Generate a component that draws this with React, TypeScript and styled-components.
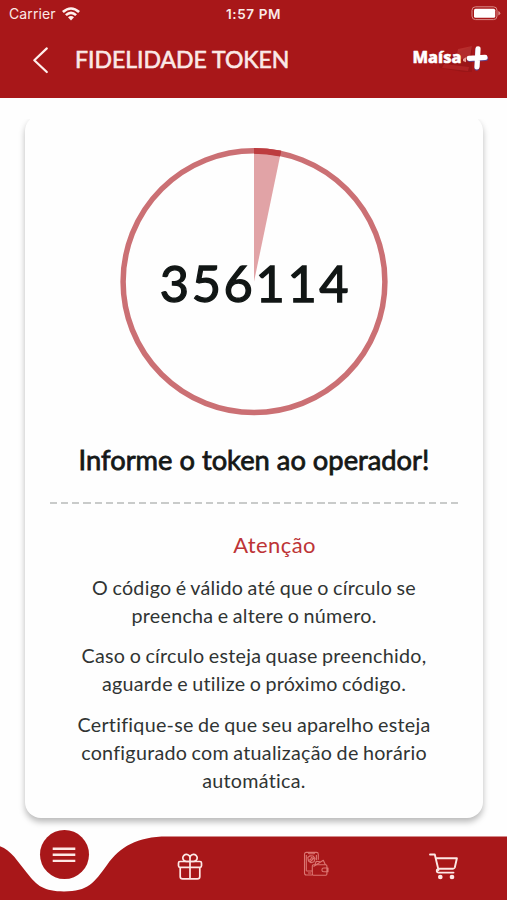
import React from "react";
import styled, { createGlobalStyle } from "styled-components";

const RED = "#a81719";

const GlobalStyle = createGlobalStyle`
  * { box-sizing: border-box; }
  html, body { margin: 0; background: #fefefe; }
  body { font-family: Lato, "Liberation Sans", sans-serif; }
`;

const Screen = styled.div`
  width: 507px;
  height: 900px;
  display: flex;
  flex-direction: column;
  overflow: hidden;
  background: #fefefe;
`;

const Header = styled.header`
  height: 98px;
  flex: none;
  background: ${RED};
  color: #fbe9e7;
`;

const StatusBar = styled.div`
  display: grid;
  grid-template-columns: 1fr auto 1fr;
  align-items: center;
  height: 27px;
  padding: 0 6px 0 9px;
  font-family: Inter, Roboto, sans-serif;
  font-size: 14px;
`;

const Carrier = styled.div`
  display: flex;
  align-items: center;
  gap: 6px;
  letter-spacing: 0.1px;
`;

const Clock = styled.div`
  font-size: 13.5px;
  font-weight: 600;
  letter-spacing: 0.6px;
  margin-right: 3px;
`;

const BatterySlot = styled.div`
  display: flex;
  justify-content: flex-end;
`;

const TitleBar = styled.div`
  display: flex;
  align-items: center;
  height: 66px;
  padding: 0 17px 0 32px;
`;

const Title = styled.h1`
  flex: 1;
  margin: -3px 0 0 26px;
  font-size: 23px;
  font-weight: 400;
  line-height: 28px;
  white-space: nowrap;
  -webkit-text-stroke: 0.6px currentColor;
`;

const Content = styled.main`
  flex: 1;
  padding: 17px 24px 0 25px;
`;

const Card = styled.section`
  height: 703px;
  padding: 33px 25px 0;
  border-radius: 16px;
  background: #fefefe;
  box-shadow: 0 4px 6px rgba(0, 0, 0, 0.27);
  display: flex;
  flex-direction: column;
  align-items: center;
  clip-path: inset(4px -12px -16px -12px);
`;

const Dial = styled.div`
  display: grid;
  width: 268px;
  height: 268px;
  place-items: center;

  > * { grid-area: 1 / 1; }
`;

const Token = styled.div`
  color: #111615;
  font-size: 50.5px;
  font-weight: 400;
  line-height: 60px;
  letter-spacing: 2.6px;
  margin-left: 3px;
  margin-top: 1px;
  -webkit-text-stroke: 1.3px currentColor;
`;

const Headline = styled.h2`
  margin: 27px 0 0;
  color: #151817;
  font-size: 27.3px;
  font-weight: 400;
  line-height: 34px;
  white-space: nowrap;
  -webkit-text-stroke: 0.8px currentColor;
`;

const Divider = styled.hr`
  width: 408px;
  height: 2px;
  margin: 25px 0 0;
  border: 0;
  background: repeating-linear-gradient(90deg, #c9cbca 0 7.2px, transparent 7.2px 11.14px);
`;

const Warning = styled.h3`
  margin: 27px 0 15px 41px;
  color: #bd3436;
  font-size: 22px;
  font-weight: 400;
  line-height: 28px;
  letter-spacing: 0.4px;
`;

const Note = styled.p`
  margin: 0 0 12.4px;
  color: #303433;
  font-size: 19.7px;
  line-height: 28px;
  letter-spacing: 0.28px;
  word-spacing: -1px;
  text-align: center;
  white-space: nowrap;
`;

const Footer = styled.nav`
  position: relative;
  flex: none;
  height: 72px;
`;

const Wave = styled.svg`
  position: absolute;
  inset: 0;
  display: block;
`;

const Tabs = styled.div`
  position: relative;
  display: grid;
  grid-template-columns: repeat(4, 126.6px);
  height: 72px;
`;

const Tab = styled.button<{ $top: number; $nudge?: number }>`
  display: flex;
  justify-content: center;
  align-items: flex-start;
  padding: ${(p) => p.$top}px 0 0 ${(p) => p.$nudge ?? 0}px;
  border: 0;
  background: none;
  color: #fde8e5;
`;

const MenuDisc = styled.span`
  display: grid;
  place-items: center;
  width: 49px;
  height: 49px;
  border-radius: 50%;
  background: ${RED};
`;

const Wifi = () => (
  <svg width="18" height="14" viewBox="0 0 18 14" fill="#fff1ee">
    <path d="M0 4.1Q9-3.7 18 4.1L16.2 6Q9-.7 1.8 6Z" />
    <path d="M3 7.2Q9 2 15 7.2L13.2 9Q9 5.3 4.8 9Z" />
    <path d="M6 10.3Q9 7.7 12 10.3L9 13.4Z" />
  </svg>
);

const Battery = () => (
  <svg width="30" height="15" viewBox="0 0 30 15">
    <rect x="1" y=".8" width="25" height="12.8" rx="3.5" fill="none" stroke="#d98b88" />
    <rect x="3" y="2.7" width="21.2" height="9" rx="1.5" fill="#fff" />
    <path d="M27.3 5v4.6q2-.8 2-2.3t-2-2.3Z" fill="#d98b88" />
  </svg>
);

const Back = () => (
  <svg width="17" height="28" viewBox="0 0 17 28" fill="none" stroke="#fff0ed" strokeWidth="2.2" strokeLinecap="round" strokeLinejoin="round">
    <path d="M14.8 2.4 2.3 14.2 14.8 26" />
  </svg>
);

const Brand = () => (
  <svg width="78" height="34" viewBox="0 0 78 34">
    <path d="M26 18 60 3 60 29 52 29 28 25Z" fill="#8c1416" opacity=".5" />
    <path d="M46 6 60 3 58 14 44 17Z" fill="#c33d3b" opacity=".6" />
    <path d="M32 21 57 24 56 28 30 25Z" fill="#bd292b" opacity=".6" />
    <text x="0.5" y="19.5" fill="#fff" stroke="#fff" strokeWidth=".5" strokeLinejoin="round" fontFamily="Noto Sans, sans-serif" fontSize="16" fontWeight="800" textLength="49" lengthAdjust="spacingAndGlyphs">Maísa</text>
    <path d="M51 16 54 14.3v5l-3-1.3Z" fill="#e8a09a" />
    <path d="M65.5 7 64.8 25.2M57.5 16.4 73.8 15.4" stroke="#634087" strokeWidth="5" strokeLinecap="round" />
    <path d="M66 5.8 65 23.8M57.2 15.4 73 14.4" stroke="#fff" strokeWidth="5.2" strokeLinecap="round" />
  </svg>
);

const MenuIcon = () => (
  <svg width="24" height="18" viewBox="0 0 24 18" stroke="#fde8e5" strokeWidth="2.4">
    <path d="M.7 2.8h22.6M.7 8.8h22.6M.7 14.9h22.6" />
  </svg>
);

const Gift = () => (
  <svg width="26" height="28" viewBox="0 0 26 28" fill="none" stroke="currentColor" strokeWidth="1.7" strokeLinejoin="round">
    <rect x="1.5" y="8.5" width="23" height="5.8" rx="1.5" />
    <path d="M3.2 14.3v9.2q0 2.4 2.4 2.4h14.8q2.4 0 2.4-2.4v-9.2M13 5.4v20.5M13 8.2V5.1a3.6 3.6 0 1 0-3.6 3.4H13M13 8.2V5.1a3.6 3.6 0 1 1 3.6 3.4H13" />
  </svg>
);

const PhoneWallet = () => (
  <svg width="26" height="26" viewBox="0 0 26 26" fill="none" stroke="#dc7672" strokeWidth="1.1" strokeLinejoin="round">
    <path d="M9.5 24H3.4Q1.5 24 1.5 22V3.2Q1.5 1.4 3.4 1.4h10q1.9 0 1.9 1.8v5.5M5 1.4l1 1.4h5l1-1.4M3.3 19.7V4M13.4 4v5M3.3 20h6M5 22h3" />
    <path d="m4.8 6.5 2.2-1.7 3.2.2 1.8 2.5-1 3.3-3 1-2.5-1.7ZM5.5 9.5l2-1 1-2 2 1M7 11l4-4" />
    <path d="M10.5 15.5 20.3 9.3l2.2 4.8M12 13.5l1.3-3.2 4 .4" />
    <path d="M10.5 13.8h12.2q1.2 0 1.2 1.2v8q0 1.2-1.2 1.2H10.5q-1.2 0-1.2-1.2v-8q0-1.2 1.2-1.2ZM25 17h-4.2a1.9 1.9 0 0 0 0 3.8H25Z" />
  </svg>
);

const Cart = () => (
  <svg width="30" height="28" viewBox="0 0 30 28" fill="none" stroke="currentColor" strokeWidth="1.9" strokeLinejoin="round" strokeLinecap="round">
    <path d="M1 1.5h4.8L9.5 17M6.8 5.2h21.1l-2.1 9.3q-.5 1.2-1.8 1.2H10q-2.2.2-2.2 2t2 1.9h14.7" />
    <circle cx="11.3" cy="24" r="1.4" fill="currentColor" />
    <circle cx="23" cy="24" r="1.4" fill="currentColor" />
  </svg>
);

const notes = [
  ["O código é válido até que o círculo se", "preencha e altere o número."],
  ["Caso o círculo esteja quase preenchido,", "aguarde e utilize o próximo código."],
  ["Certifique-se de que seu aparelho esteja", "configurado com atualização de horário", "automática."],
];

export default function App() {
  return (
    <Screen>
      <GlobalStyle />
      <Header>
        <StatusBar>
          <Carrier>Carrier <Wifi /></Carrier>
          <Clock>1:57 PM</Clock>
          <BatterySlot><Battery /></BatterySlot>
        </StatusBar>
        <TitleBar>
          <Back />
          <Title>FIDELIDADE TOKEN</Title>
          <Brand />
        </TitleBar>
      </Header>
      <Content>
        <Card>
          <Dial>
            <svg width="268" height="268" viewBox="0 0 268 268">
              <circle cx="134" cy="133.7" r="130.9" fill="none" stroke="#cb7074" strokeWidth="5.5" />
              <path d="M134 133.7V0A133.7 133.7 0 0 1 161.2 2.8Z" fill="#b71c22" fillOpacity=".4" />
              <path d="M134 0A133.7 133.7 0 0 1 161.2 2.8L160 8.5A128 128 0 0 0 134 5.7Z" fill="#bd3c3f" />
            </svg>
            <Token>356114</Token>
          </Dial>
          <Headline>Informe o token ao operador!</Headline>
          <Divider />
          <Warning>Atenção</Warning>
          {notes.map((lines) => (
            <Note key={lines[0]}>
              {lines.map((line, i) => (
                <React.Fragment key={line}>{i > 0 && <br />}{line}</React.Fragment>
              ))}
            </Note>
          ))}
        </Card>
      </Content>
      <Footer>
        <Wave width="507" height="72" viewBox="0 0 507 72">
          <path d="M0 18.3C11 22 18 34 27 45C37 58 44 63.4 64 63.4C88 63.4 94 55 107 37C120 19 137 8.6 167 8.6H507V72H0Z" fill={RED} />
        </Wave>
        <Tabs>
          <Tab $top={2} $nudge={2} aria-label="Menu"><MenuDisc><MenuIcon /></MenuDisc></Tab>
          <Tab $top={25} aria-label="Presentes"><Gift /></Tab>
          <Tab $top={23} aria-label="Carteira"><PhoneWallet /></Tab>
          <Tab $top={25} $nudge={2} aria-label="Carrinho"><Cart /></Tab>
        </Tabs>
      </Footer>
    </Screen>
  );
}
